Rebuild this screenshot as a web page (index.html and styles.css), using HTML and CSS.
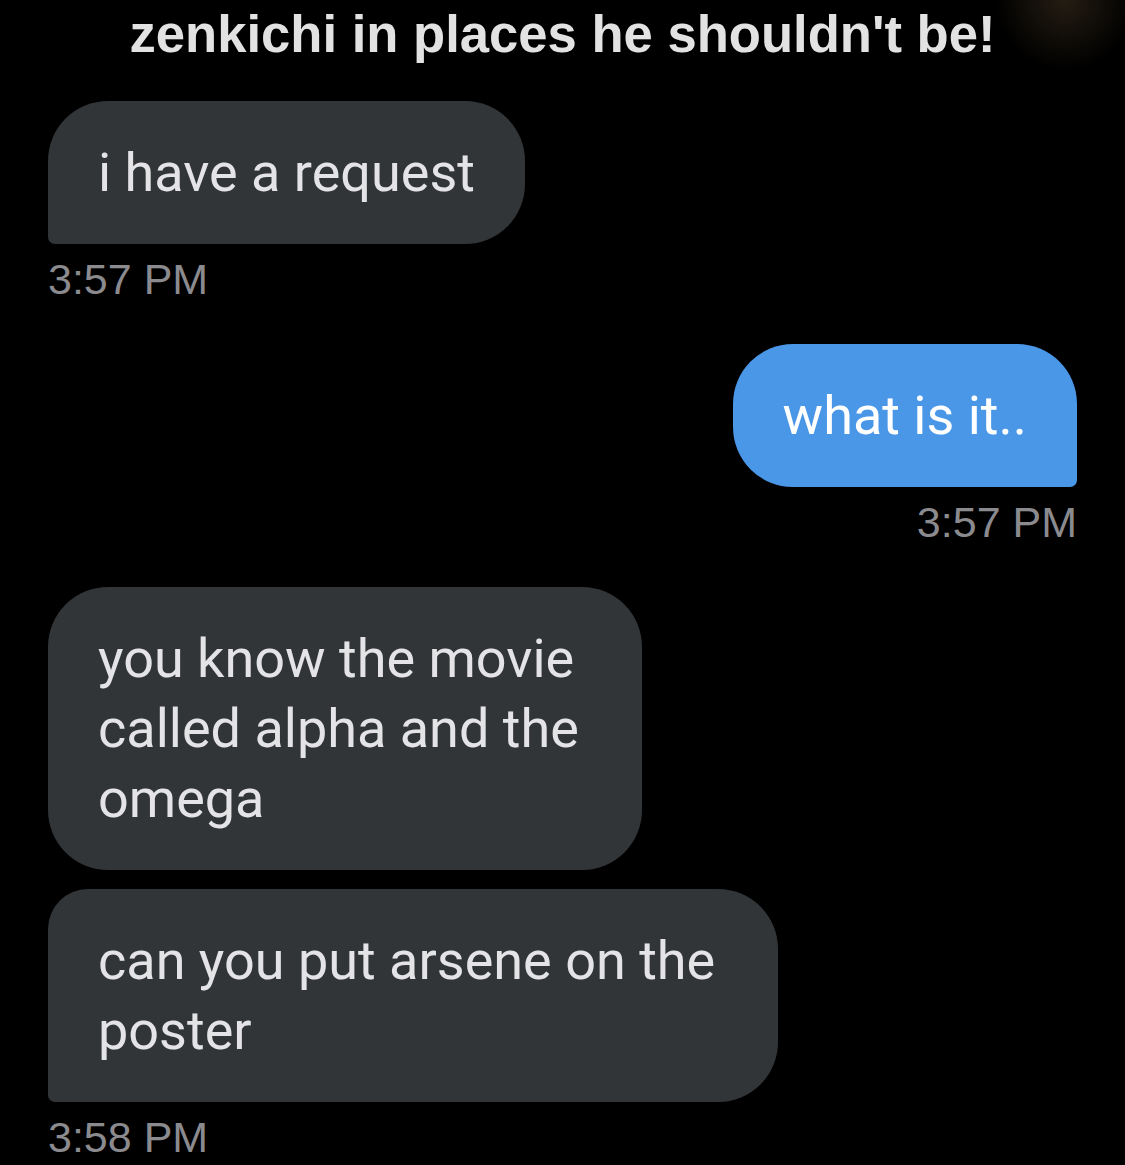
FILE: index.html
```html
<!DOCTYPE html>
<html lang="en">
  <head>
    <meta charset="UTF-8" />
    <meta name="viewport" content="width=device-width, initial-scale=1.0" />
    <title>zenkichi in places he shouldn't be!</title>
    <link rel="stylesheet" href="styles.css">
  </head>
  <body>
    <div class="screen">
      <h1 class="caption">zenkichi in places he shouldn't be!</h1>
      <div class="thread">
        <div class="group incoming">
          <div class="bubble single">i have a request</div>
          <p class="time">3:57 PM</p>
        </div>
        <div class="group outgoing">
          <div class="bubble single">what is it..</div>
          <p class="time">3:57 PM</p>
        </div>
        <div class="group incoming">
          <div class="bubble first">you know the movie<br />called alpha and the<br />omega</div>
          <div class="bubble last">can you put arsene on the<br />poster</div>
          <p class="time">3:58 PM</p>
        </div>
      </div>
    </div>
  </body>
</html>
```

FILE: styles.css
```css
body {
  margin: 0;
  background-color: #000;
  font-family: "Roboto", "Liberation Sans", sans-serif;
}
.screen {
  width: 1125px;
  height: 1165px;
  overflow: hidden;
  background: radial-gradient(circle at 1065px 0px, rgba(60, 48, 30, 0.6), rgba(0, 0, 0, 0) 70px), #000;
}
.caption {
  margin: 0;
  padding-top: 2px;
  height: 101px;
  box-sizing: border-box;
  text-align: center;
  font-family: "Liberation Sans", Arial, sans-serif;
  font-weight: bold;
  font-size: 52.6px;
  line-height: 64px;
  color: #e2e2e2;
}
.thread {
  display: flex;
  flex-direction: column;
  padding: 0 48px 0 48px;
  gap: 43px;
}
.group {
  display: flex;
  flex-direction: column;
  gap: 19px;
}
.incoming {
  align-items: flex-start;
}
.outgoing {
  align-items: flex-end;
}
.bubble {
  padding: 36.5px 50px;
  font-size: 54px;
  line-height: 70px;
  color: #e4e4e6;
  background-color: #323538;
  border-radius: 60px;
}
.incoming .first,
.incoming .last {
  padding-right: 63px;
}
.incoming .single,
.incoming .last {
  border-bottom-left-radius: 7px;
}
.incoming .last {
  border-top-left-radius: 40px;
}
.outgoing .bubble {
  background-color: #4a97e8;
  color: #fff;
  border-bottom-right-radius: 7px;
}
.time {
  margin: -6px 0 0;
  font-family: "Liberation Sans", Arial, sans-serif;
  font-size: 43px;
  line-height: 44px;
  color: #8b8b8f;
}
```
